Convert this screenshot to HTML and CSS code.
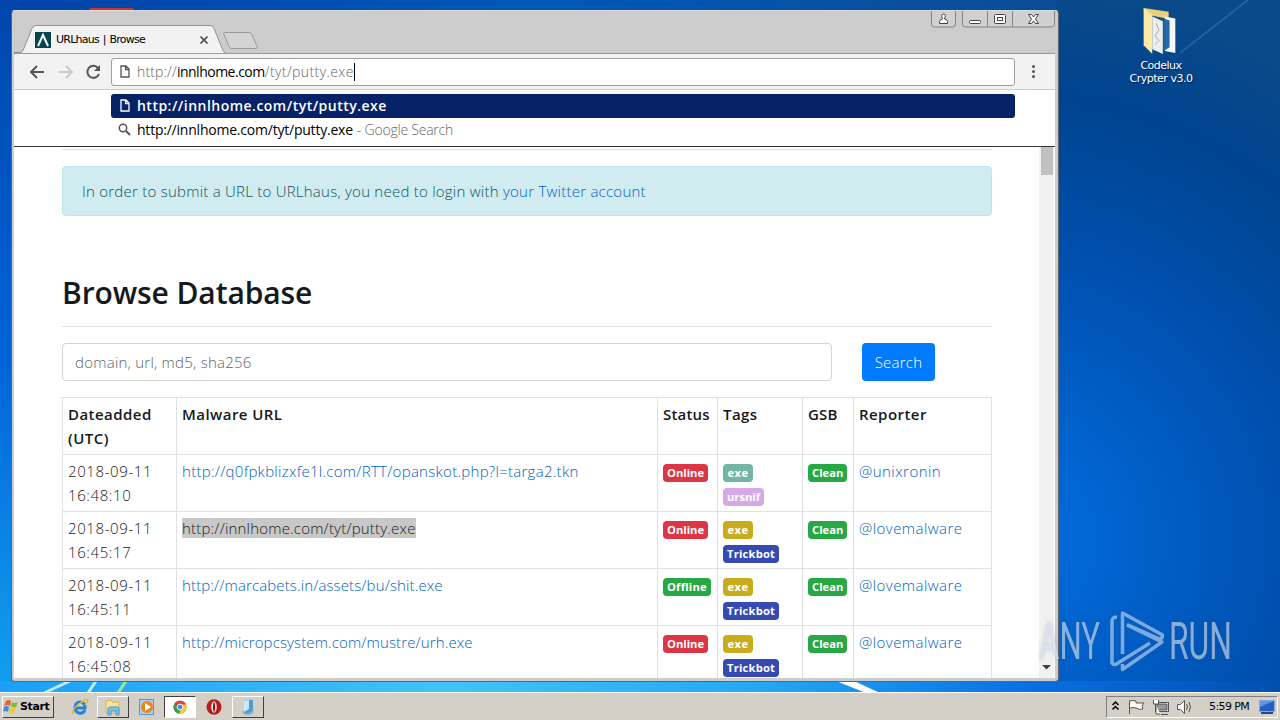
FILE: index.html
```html
<!DOCTYPE html>
<html lang="en">
<head>
    <meta charset="UTF-8">
    <title>URLhaus | Browse</title>
    <link rel="stylesheet" href="styles.css">
</head>
<body>

<div class="desktop">
    <svg class="wallpaper" width="1280" height="720" viewBox="0 0 1280 720">
        <defs>
            <radialGradient id="sky" gradientUnits="userSpaceOnUse" cx="1000" cy="540" r="560">
                <stop offset="0" stop-color="#0070e2"/>
                <stop offset=".2" stop-color="#0064d0"/>
                <stop offset=".5" stop-color="#0050b0"/>
                <stop offset=".8" stop-color="#004490"/>
                <stop offset="1" stop-color="#0a4a88"/>
            </radialGradient>
            <linearGradient id="top" x1="0" y1="0" x2="1" y2="0">
                <stop offset="0" stop-color="#0042a8"/>
                <stop offset=".5" stop-color="#0058b8"/>
                <stop offset="1" stop-color="#0a4c94"/>
            </linearGradient>
            <linearGradient id="left" x1="0" y1="0" x2="0" y2="1">
                <stop offset="0" stop-color="#0046ac"/>
                <stop offset=".5" stop-color="#0064d8"/>
                <stop offset="1" stop-color="#14a4f4"/>
            </linearGradient>
            <linearGradient id="floor" x1="0" y1="0" x2="1" y2="0">
                <stop offset="0" stop-color="#1aa0f8"/>
                <stop offset=".35" stop-color="#40c4f8"/>
                <stop offset=".6" stop-color="#20a8f4"/>
                <stop offset=".8" stop-color="#0a70e4"/>
                <stop offset="1" stop-color="#0050b0"/>
            </linearGradient>
        </defs>
        <rect width="1280" height="720" fill="url(#sky)"/>
        <rect width="1060" height="14" fill="url(#top)"/>
        <rect width="20" height="720" fill="url(#left)"/>
        <rect y="681" width="1280" height="12" fill="url(#floor)"/>
        <path d="M70 681L44 693M96 681l-8 12" stroke="#c4ecff" stroke-width="3"/>
        <path d="M126 681l-8 12" stroke="#a0e88c" stroke-width="3"/>
        <path d="M836 681h18l26 12h-14z" fill="#fff"/>
        <path d="M1248 0L1180 53" stroke="#3c78b8" stroke-width="2" opacity=".5"/>
    </svg>

    <div class="shortcut">
        <svg width="40" height="48" viewBox="0 0 40 50">
            <path d="M4 2l26 4v36H8z" fill="#ecd078"/>
            <path d="M12 10l21 4v34l-21-6z" fill="#1d4f80"/>
            <path d="M26 11l11 2v36l-11-2z" fill="#f4f6f8"/>
            <path d="M25 13l6 2v28l-6 4z" fill="#2468a8"/>
            <path d="M13 11l11 5v34l-11-5z" fill="#eceeee"/>
            <path d="M17 18l3 7-4 6 4 5-4 4" fill="none" stroke="#9aa"/>
            <path d="M4 2l9 7v41L4 41z" fill="#fbe9a4"/>
        </svg>
        <span>Codelux<br>Crypter v3.0</span>
    </div>

    <div class="behind"></div>

    <div class="window">
        <div class="titlebar">
            <svg class="tabs" width="260" height="43" viewBox="0 0 260 43">
                <path d="M2 42.500h6q2 0 3-2l9-22q1-3 4-3h174q3 0 4 3l9 22q1 2 3 2v1H2z" fill="#f2f2f2"/>
                <path d="M2 42.500h6q2 0 3-2l9-22q1-3 4-3h174q3 0 4 3l9 22q1 2 3 2" fill="none" stroke="#929292"/>
                <path d="M213 22.500h24q2 0 3 2l5 12q1 2-1 2h-24q-2 0-3-2l-5-12q-1-2 1-2z" fill="#d4d4d4" stroke="#999"/>
                <rect x="23" y="22" width="16" height="16" fill="#064450"/>
                <path d="M26 36l5-11 5 11" fill="none" stroke="#fff" stroke-width="2"/>
                <path d="M188.500 26.500l7 7m0-7l-7 7" stroke="#444" stroke-width="1.600"/>
            </svg>
            <span class="tab-title">URLhaus | Browse</span>
            <svg class="controls" width="124" height="18" viewBox="0 0 124 18">
                <g fill="#d0d0d0" stroke="#858585">
                    <path d="M.5 0v13q0 3 3 3h18q3 0 3-3V0"/>
                    <path d="M31.500 0v13q0 3 3 3h86q3 0 3-3V0M56.500 0v16M81.500 0v16"/>
                </g>
                <g fill="#fff" stroke="#444">
                    <path d="M8.500 12.500v-2q0-2 3-2.500-2-5 1-5t1 5q3 .5 3 2.500v2z"/>
                    <rect x="38.500" y="9.500" width="11" height="3" rx="1"/>
                    <rect x="63.500" y="3.500" width="11" height="9" rx="1"/>
                    <rect x="66.500" y="6.500" width="5" height="3"/>
                    <path d="M97.500 3.500h3l2 2.500 2-2.500h3l-3 4.500 3 4.500h-3l-2-2.500-2 2.500h-3l3-4.500z"/>
                </g>
            </svg>
        </div>

        <div class="toolbar">
            <svg width="98" height="36" viewBox="0 0 98 36">
                <g fill="none" stroke-width="2">
                    <path d="M30 18H17m6-6l-6 6 6 6" stroke="#555"/>
                    <path d="M45 18h13m-6-6l6 6-6 6" stroke="#ccc"/>
                    <path d="M84 14a6 6 0 1 0 1 6" stroke="#555"/>
                </g>
                <path d="M86 11v6h-6z" fill="#555"/>
            </svg>
            <div class="omnibox">
                <svg width="10" height="13" viewBox="0 0 10 13"><path d="M1 1h5l3 3v8H1zM5.500 1v3.500H9" fill="none" stroke="#555" stroke-width="1.300"/></svg>
                <span class="address">http://<b>innlhome.com</b><span class="path">/tyt/putty.exe</span></span><i class="caret"></i>
            </div>
            <div class="menu-dots"><i></i><i></i><i></i></div>
        </div>

        <div class="suggestions">
            <div class="suggestion selected">
                <svg width="10" height="13" viewBox="0 0 10 13"><path d="M1 1h5l3 3v8H1zM5.500 1v3.500H9" fill="none" stroke="#fff" stroke-width="1.300"/></svg>
                <span>http://innlhome.com/tyt/putty.exe</span>
            </div>
            <div class="suggestion">
                <svg width="13" height="13" viewBox="0 0 13 13"><path d="M8 8l4 4" stroke="#555" stroke-width="2"/><circle cx="5" cy="5" r="3.700" fill="none" stroke="#555" stroke-width="1.500"/></svg>
                <span>http://innlhome.com/tyt/putty.exe</span>
                <em>- Google Search</em>
            </div>
        </div>

        <div class="viewport">
            <div class="page">
                <hr>
                <div class="alert">In order to submit a URL to URLhaus, you need to login with <a>your Twitter account</a></div>
                <h2>Browse Database</h2>
                <hr>
                <div class="search-row">
                    <div class="search-input">domain, url, md5, sha256</div>
                    <div class="btn">Search</div>
                </div>
                <table>
                    <colgroup><col class="c-date"><col class="c-url"><col class="c-status"><col class="c-tags"><col class="c-gsb"><col class="c-rep"></colgroup>
                    <tr><th>Dateadded (UTC)</th><th>Malware URL</th><th class="tight">Status</th><th>Tags</th><th class="tight">GSB</th><th>Reporter</th></tr>
                    <tr>
                        <td class="date">2018-09-11 16:48:10</td>
                        <td><a class="long">http://q0fpkblizxfe1l.com/RTT/opanskot.php?l=targa2.tkn</a></td>
                        <td><span class="badge online">Online</span></td>
                        <td><span class="badge exe-teal">exe</span><br><span class="badge ursnif">ursnif</span></td>
                        <td><span class="badge clean">Clean</span></td>
                        <td><a class="user">@unixronin</a></td>
                    </tr>
                    <tr>
                        <td class="date">2018-09-11 16:45:17</td>
                        <td><a class="marked">http://innlhome.com/tyt/putty.exe</a></td>
                        <td><span class="badge online">Online</span></td>
                        <td><span class="badge exe">exe</span><br><span class="badge trickbot">Trickbot</span></td>
                        <td><span class="badge clean">Clean</span></td>
                        <td><a class="user">@lovemalware</a></td>
                    </tr>
                    <tr>
                        <td class="date">2018-09-11 16:45:11</td>
                        <td><a class="short">http://marcabets.in/assets/bu/shit.exe</a></td>
                        <td><span class="badge offline">Offline</span></td>
                        <td><span class="badge exe">exe</span><br><span class="badge trickbot">Trickbot</span></td>
                        <td><span class="badge clean">Clean</span></td>
                        <td><a class="user">@lovemalware</a></td>
                    </tr>
                    <tr>
                        <td class="date">2018-09-11 16:45:08</td>
                        <td><a class="short">http://micropcsystem.com/mustre/urh.exe</a></td>
                        <td><span class="badge online">Online</span></td>
                        <td><span class="badge exe">exe</span><br><span class="badge trickbot">Trickbot</span></td>
                        <td><span class="badge clean">Clean</span></td>
                        <td><a class="user">@lovemalware</a></td>
                    </tr>
                </table>
            </div>
            <div class="scrollbar">
                <div class="thumb"></div>
                <svg width="9" height="5" viewBox="0 0 9 5"><path d="M0 0h9L4.500 4.500z" fill="#404040"/></svg>
            </div>
        </div>
    </div>

    <svg class="watermark" width="236" height="72" viewBox="0 0 236 72">
        <g fill="#cfdceb">
            <text x="1" y="49" textLength="61" lengthAdjust="spacingAndGlyphs">ANY</text>
            <text x="131" y="49" textLength="63" lengthAdjust="spacingAndGlyphs">RUN</text>
        </g>
        <g fill="none" stroke="#b8d4f4" stroke-width="3.500" stroke-linejoin="round">
            <path d="M79 7.500q-5-1-5 4V53q2 3 6 0l32-20"/>
            <path d="M84.500 44V3l40 22q0 4-3 4L89 14.500"/>
            <path d="M89 15l35 17-39.500 27.500V54"/>
        </g>
    </svg>

    <div class="taskbar">
        <div class="start">
            <svg width="16" height="16" viewBox="0 0 16 16">
                <path d="M3 2q3-2 5 0L7 7Q4 5 1 7z" fill="#e8622c"/><path d="M9 3q3 2 6 0l-2 5q-3 1-5-1z" fill="#7cba3c"/>
                <path d="M1 8q3-2 5 0l-1 5q-3-2-5 0z" fill="#3c8cdc"/><path d="M7 8q3 2 6 0l-2 5q-3 2-5 0z" fill="#f8c430"/>
            </svg>
            <b>Start</b>
        </div>
        <div class="task ie">
            <svg width="18" height="18" viewBox="0 0 18 18"><path d="M14 12q-2 4-6 3-4-1-4-6 1-5 5-5 5 0 5 6H5" fill="none" stroke="#2583d8" stroke-width="3"/><path d="M2 16Q0 12 8 6t9-4q0 2-3 5" fill="none" stroke="#e8b82c" stroke-width="1.500"/></svg>
        </div>
        <div class="task raised">
            <svg width="18" height="18" viewBox="0 0 18 18"><path d="M2 3l5-1 1 2h7v11H2z" fill="#f8e498" stroke="#d8b450"/><path d="M4 17v-6q0-2 2-2h7q2 0 2 2v6h-3v-4H7v4z" fill="#78c4ec" stroke="#4898cc"/></svg>
        </div>
        <div class="task">
            <svg width="18" height="18" viewBox="0 0 18 18"><rect x="1.500" y="1.500" width="14" height="15" fill="#a8d0f0" stroke="#5898d0"/><circle cx="9" cy="9" r="6" fill="#f08418"/><path d="M7 5l6 4-6 4z" fill="#fff"/></svg>
        </div>
        <div class="task pressed">
            <svg width="14" height="14" viewBox="0 0 16 16"><circle cx="8" cy="8" r="7.500" fill="#e04434"/><path d="M8 8L1.500 4.500A7.500 7.500 0 0 0 7 15.500z" fill="#34a050"/><path d="M8 5h7q2 6-3 9.500-2 1-5 1L9 9z" fill="#f8cc30"/><circle cx="8" cy="8" r="3.300" fill="#4888e8" stroke="#fff"/></svg>
        </div>
        <div class="task opera">
            <svg width="16" height="16" viewBox="0 0 16 16"><ellipse cx="8" cy="8" rx="7.500" ry="7.800" fill="#b81c20"/><ellipse cx="8" cy="8" rx="2.800" ry="5.800" fill="#ece4e0"/><ellipse cx="8" cy="8" rx="1" ry="4.800" fill="#8c1014"/></svg>
        </div>
        <div class="task raised">
            <svg width="16" height="18" viewBox="0 0 16 18"><path d="M2 14l4-3h7l1 3-4 3H5z" fill="#8fb0c4"/><path d="M4 3q4-2 9-1v10q-1 2-4 3H4z" fill="#4c9cd0"/><path d="M4 3q3-1 5-1v9l-5 3z" fill="#cfe8f6"/></svg>
        </div>
        <div class="tray">
            <svg width="90" height="20" viewBox="0 0 90 20">
                <path d="M5.500 8l3-3 3 3M5.500 12.500l3-3 3 3" fill="none" stroke="#000" stroke-width="1.500"/>
                <g fill="#fff" stroke="#555">
                    <path d="M22.500 17V3.500M23 4q3-1 6 0v2h8l-2 3 1 3q-4 1-7-1-3-1-6 0"/>
                    <rect x="48.500" y="5.500" width="13" height="9"/><path d="M50 7h10v6H50z" fill="#999"/><path d="M54 17.500h7M46.500 3v4h5V3M49 7v10h4"/>
                    <path d="M70.500 7.500h3l4-4v13l-4-4h-3z"/><path d="M79.500 7q2 3 0 6M82 5q3 5 0 10" fill="none"/>
                </g>
            </svg>
            <span class="clock">5:59 PM</span>
            <svg width="16" height="14" viewBox="0 0 16 14"><rect x=".5" y=".5" width="15" height="11" fill="#2460c4" stroke="#88a8d4"/><path d="M1 1h14L1 7z" fill="#5898e4"/><path d="M2 13h12" stroke="#2c4878" stroke-width="2"/></svg>
        </div>
    </div>
</div>

</body>
</html>
```

FILE: styles.css
```css
* {
    box-sizing: border-box;
}

body {
    margin: 0;
    font-family: "Open Sans", "Noto Sans", sans-serif;
    overflow: hidden;
}

svg {
    display: block;
    flex: none;
}

.desktop {
    position: relative;
    width: 1280px;
    height: 720px;
    overflow: hidden;
}

.wallpaper {
    position: absolute;
    left: 0;
    top: 0;
}

.shortcut {
    position: absolute;
    left: 1111px;
    top: 6px;
    width: 100px;
    display: flex;
    flex-direction: column;
    align-items: center;
    color: #fff;
    font: 11px/13px "DejaVu Sans", sans-serif;
    letter-spacing: -0.5px;
    text-align: center;
    text-shadow: 1px 1px 1px #002050;
}

.shortcut svg {
    margin-right: 5px;
}

.shortcut span {
    margin-top: 5px;
}

.behind {
    position: absolute;
    left: 89px;
    top: 8px;
    width: 45px;
    height: 4px;
    background: #d03428;
    border-radius: 2px;
}

/* browser window */
.window {
    position: absolute;
    left: 11px;
    top: 10px;
    width: 1048px;
    height: 672px;
    padding: 0 3px 3px 2px;
    display: flex;
    flex-direction: column;
    background: #ccc;
    border: 1px solid #606468;
    border-top-color: #d8dce0;
    border-radius: 4px;
}

.titlebar {
    position: relative;
    display: flex;
    justify-content: space-between;
    height: 43px;
    border-bottom: 1px solid #999;
}

.tabs {
    margin: -1px 0 0 -2px;
}

.tab-title {
    position: absolute;
    left: 42px;
    top: 21px;
    font: 11px/16px "DejaVu Sans", sans-serif;
    letter-spacing: -0.75px;
    word-spacing: 1px;
    white-space: nowrap;
}

.toolbar {
    display: flex;
    align-items: center;
    height: 36px;
    background: #f2f2f2;
    border-bottom: 1px solid #ccc;
}

.omnibox {
    display: flex;
    align-items: center;
    width: 904px;
    height: 28px;
    margin-left: -1px;
    padding-left: 8px;
    background: #fff;
    border: 1px solid #a0a0a0;
    border-radius: 3px;
    font-size: 14px;
    color: #666;
}

.address {
    margin-left: 7px;
    font-weight: 300;
    letter-spacing: 0.15px;
}

.address b {
    font-weight: 400;
    letter-spacing: -0.5px;
    color: #000;
}

.path {
    letter-spacing: 0.4px;
}

.caret {
    width: 1px;
    height: 18px;
    background: #000;
}

.menu-dots {
    display: grid;
    gap: 2px;
    margin-left: 17px;
}

.menu-dots i {
    width: 3px;
    height: 3px;
    border-radius: 50%;
    background: #555;
}

.suggestions {
    height: 57px;
    padding: 4px 0 0 97px;
    background: #fff;
    border-bottom: 1px solid #333;
}

.suggestion {
    display: flex;
    align-items: center;
    width: 904px;
    height: 23px;
    padding-left: 7px;
    border-radius: 3px;
    font-size: 14px;
    letter-spacing: -0.22px;
}

.suggestion span {
    margin-left: 6px;
}

.suggestion em {
    margin-left: 4px;
    font-style: normal;
    font-weight: 300;
    color: #666;
}

.selected {
    height: 24px;
    padding: 0 0 1px 9px;
    background: #072266;
    color: #fff;
    font-weight: 600;
    letter-spacing: 0.48px;
}

.selected span {
    margin-left: 7px;
}

/* URLhaus page */
.viewport {
    display: flex;
    flex: 1;
    min-height: 0;
    overflow: hidden;
    background: #fff;
}

.page {
    flex: 1;
    padding: 2px 47px 0 48px;
    font-size: 15px;
    font-weight: 300;
    letter-spacing: 0.24px;
    line-height: 24px;
    color: #16191c;
}

hr {
    margin: 0 0 16px;
    border: 0;
    border-top: 1px solid #e2e2e2;
}

a {
    color: #0062c4;
}

.alert {
    height: 50px;
    padding: 12px 19px;
    margin-bottom: 57px;
    border: 1px solid #bee5eb;
    border-radius: 4px;
    background: #d1ecf1;
    color: #0c5460;
}

h2 {
    margin: 0 0 14px;
    font-size: 30px;
    font-weight: 600;
    letter-spacing: -0.1px;
    line-height: 39px;
}

.search-row {
    display: flex;
    gap: 30px;
    margin-bottom: 16px;
}

.search-input {
    width: 770px;
    height: 38px;
    padding: 6px 12px;
    border: 1px solid #ced4da;
    border-radius: 4px;
    color: #5c656d;
}

.btn {
    width: 73px;
    height: 38px;
    border-radius: 4px;
    background: #007bff;
    color: #fff;
    line-height: 38px;
    text-align: center;
}

table {
    width: 929px;
    table-layout: fixed;
    border-collapse: collapse;
}

th, td {
    height: 57px;
    padding: 4px 5px;
    border: 1px solid #dee2e6;
    text-align: left;
    vertical-align: top;
}

th {
    font-weight: 600;
    letter-spacing: 0.45px;
}

.tight {
    letter-spacing: 0.2px;
}

.date {
    letter-spacing: 0.6px;
}

.user {
    letter-spacing: 0.45px;
}

.long {
    letter-spacing: 0.28px;
}

.short {
    letter-spacing: 0.13px;
}

.c-date { width: 114px; }
.c-url { width: 481px; }
.c-status { width: 60px; }
.c-tags { width: 85px; }
.c-gsb { width: 51px; }
.c-rep { width: 138px; }

.marked {
    background: #c8c8c8;
    color: #222;
    letter-spacing: 0.19px;
}

.badge {
    display: inline-block;
    height: 18px;
    padding: 0 4px;
    border-radius: 4px;
    color: #fff;
    font-size: 11.2px;
    font-weight: 700;
    letter-spacing: 0;
    line-height: 18px;
    vertical-align: middle;
}

.offline, .trickbot {
    letter-spacing: 0.2px;
}

.exe, .exe-teal {
    padding: 0 4.5px;
    letter-spacing: 0.4px;
}

.online { background: #dc3545; }
.offline, .clean { background: #28a745; }
.exe-teal { background: #72b5a0; }
.ursnif { background: #d6a9e4; }
.exe { background: #c8ac1c; }
.trickbot { background: #364ab4; }

.scrollbar {
    display: flex;
    flex-direction: column;
    justify-content: space-between;
    align-items: center;
    width: 16px;
    padding-bottom: 8px;
    background: #f1f1f1;
    margin-right: 1px;
}

.thumb {
    width: 12px;
    height: 28px;
    background: #c1c1c1;
}

.watermark {
    position: absolute;
    left: 1038px;
    top: 610px;
    font: 51px "Roboto", sans-serif;
    opacity: 0.65;
    filter: drop-shadow(0 0 2px rgba(60, 80, 100, 0.4));
}

/* taskbar */
.taskbar {
    position: absolute;
    left: 0;
    bottom: 0;
    width: 100%;
    height: 28px;
    display: flex;
    align-items: center;
    padding: 1px 2px 0;
    background: #d4d0c8;
    border-top: 1px solid #fff;
}

.start {
    display: flex;
    align-items: center;
    gap: 1px;
    width: 52px;
    height: 22px;
    margin-right: 8px;
    border: 1px solid;
    border-color: #fff #404040 #404040 #fff;
    font: 11px/16px "DejaVu Sans", sans-serif;
    letter-spacing: -0.4px;
}

.task {
    display: flex;
    align-items: center;
    justify-content: center;
    width: 35px;
    height: 22px;
}

.raised {
    width: 32px;
    border: 1px solid;
    border-color: #fff #404040 #404040 #fff;
}

.pressed {
    width: 32px;
    border: 1px solid;
    border-color: #404040 #fff #fff #404040;
    background: #fff;
}

.opera {
    width: 36px;
}

.tray {
    display: flex;
    align-items: center;
    width: 172px;
    height: 22px;
    margin-left: auto;
    border: 1px solid;
    border-color: #808080 #fff #fff #808080;
}

.clock {
    width: 50px;
    margin-left: 12px;
    font: 11px/16px "DejaVu Sans", sans-serif;
    letter-spacing: -0.6px;
    white-space: nowrap;
}
```
